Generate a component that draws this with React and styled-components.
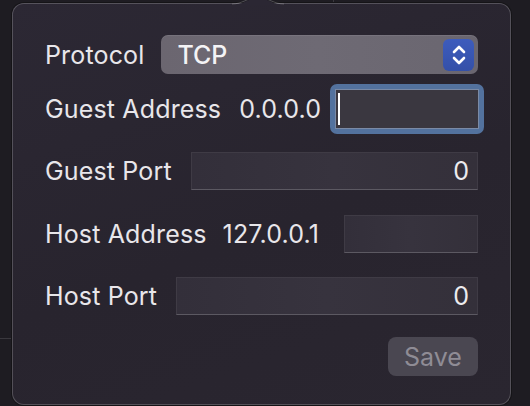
import React from "react";
import styled, { createGlobalStyle } from "styled-components";

const Global = createGlobalStyle`
  html, body { margin: 0; padding: 0; }
  body {
    width: 530px;
    height: 406px;
    overflow: hidden;
    background-color: #1e1c22;
    background-image: linear-gradient(#3a383e, #3a383e), linear-gradient(#3a383e, #3a383e);
    background-size: 12px 1px, 1px 3px;
    background-position: 0 338px, 333px 0;
    background-repeat: no-repeat;
    font-family: Inter, "Noto Sans", "Liberation Sans", sans-serif;
  }
`;

const Stage = styled.div`
  width: 530px;
  height: 406px;
  padding: 3px 19px 0 12px;
  box-sizing: border-box;
`;

const Panel = styled.div`
  position: relative;
  height: 402px;
  box-sizing: border-box;
  border-radius: 12px;
  background: linear-gradient(160deg, #2c2834 0%, #28242e 55%, #2a2630 100%);
  box-shadow: 0 0 0 1px #151417, inset 0 0 0 1px rgba(255, 255, 255, 0.2);
  padding: 32px 33px 0 33px;
  display: flex;
  flex-direction: column;
`;

const Arrow = styled.svg`
  position: absolute;
  top: -4px;
  left: 220px;
  width: 52px;
  height: 6px;
  overflow: visible;
`;

const Row = styled.div`
  display: flex;
  align-items: center;
  gap: ${(p) => p.$gap || 18}px;
  margin-top: ${(p) => p.$mt || 0}px;
  height: ${(p) => p.$h || 38}px;
`;

const Label = styled.span`
  color: #e8e6ea;
  font-size: 25px;
  letter-spacing: 0.15px;
  white-space: nowrap;
  flex: none;
`;

const Value = styled(Label)`
  margin-left: ${(p) => p.$ml || 0}px;
  margin-right: ${(p) => p.$mr || 0}px;
`;

const Popup = styled.div`
  flex: 1;
  height: 39px;
  box-sizing: border-box;
  border-radius: 7px;
  background: linear-gradient(90deg, #6b6670, #6e6a74 50%, #6a6670);
  display: flex;
  align-items: center;
  justify-content: space-between;
  padding: 0 4px 0 16px;
  box-shadow: inset 0 1px 0 rgba(255, 255, 255, 0.08);
`;

const PopupText = styled.span`
  color: #f4f3f5;
  font-size: 25px;
  font-weight: 500;
`;

const Stepper = styled.div`
  width: 31px;
  height: 32px;
  border-radius: 6px;
  background: linear-gradient(#3d5cbd, #3450a8);
  display: flex;
  align-items: center;
  justify-content: center;
`;

const FocusRing = styled.div`
  flex: 1;
  height: 50px;
  box-sizing: border-box;
  border-radius: 7px;
  background: #53729e;
  padding: 5px;
  display: flex;
  margin-left: -6px;
  margin-right: -6px;
`;

const FocusField = styled.div`
  flex: 1;
  background: #3a3740;
  border: 1px solid #7a8aa6;
  display: flex;
  align-items: center;
  padding-left: 2px;
`;

const Caret = styled.span`
  width: 2px;
  height: 32px;
  background: #ffffff;
`;

const Field = styled.div`
  flex: 1;
  height: 38px;
  box-sizing: border-box;
  background: linear-gradient(90deg, #332f3a, #37333e 50%, #34303a);
  border: 1px solid #3f3b45;
  border-bottom-color: #5c5962;
  color: #ecebee;
  font-size: 25px;
  display: flex;
  align-items: center;
  justify-content: flex-end;
  padding-right: 8px;
`;

const Footer = styled.div`
  display: flex;
  justify-content: flex-end;
  margin-top: 23px;
`;

const SaveButton = styled.button`
  width: 90px;
  height: 39px;
  border: none;
  border-radius: 8px;
  background: #4a4751;
  color: #8f8c95;
  font-family: inherit;
  font-size: 25px;
  padding: 0;
`;

export default function App() {
  return (
    <>
      <Global />
      <Stage>
        <Panel>
          <Arrow viewBox="0 0 52 6">
            <path d="M0 6 C10 6 16 0 22 0 L30 0 C36 0 42 6 52 6 Z" fill="#2b2733" />
            <path d="M0 5 C10 5 16 -1 22 -1 M30 -1 C36 -1 42 5 52 5" fill="none" stroke="rgba(255,255,255,0.22)" strokeWidth="1" />
          </Arrow>
          <Row $h={39} $gap={17}>
            <Label>Protocol</Label>
            <Popup>
              <PopupText>TCP</PopupText>
              <Stepper>
                <svg width="16" height="24" viewBox="0 0 16 24" fill="none" stroke="#ffffff" strokeWidth="2.6" strokeLinecap="round" strokeLinejoin="round">
                  <path d="M3 9 L8 4 L13 9" />
                  <path d="M3 15 L8 20 L13 15" />
                </svg>
              </Stepper>
            </Popup>
          </Row>
          <Row $mt={10} $h={50} $gap={17}>
            <Label>Guest Address</Label>
            <Value $ml={1} $mr={-2}>0.0.0.0</Value>
            <FocusRing>
              <FocusField>
                <Caret />
              </FocusField>
            </FocusRing>
          </Row>
          <Row $mt={18} $gap={19}>
            <Label>Guest Port</Label>
            <Field>0</Field>
          </Row>
          <Row $mt={25} $gap={17}>
            <Label>Host Address</Label>
            <Value $ml={-1} $mr={8}>127.0.0.1</Value>
            <Field />
          </Row>
          <Row $mt={24} $h={37} $gap={19}>
            <Label>Host Port</Label>
            <Field>0</Field>
          </Row>
          <Footer>
            <SaveButton>Save</SaveButton>
          </Footer>
        </Panel>
      </Stage>
    </>
  );
}
